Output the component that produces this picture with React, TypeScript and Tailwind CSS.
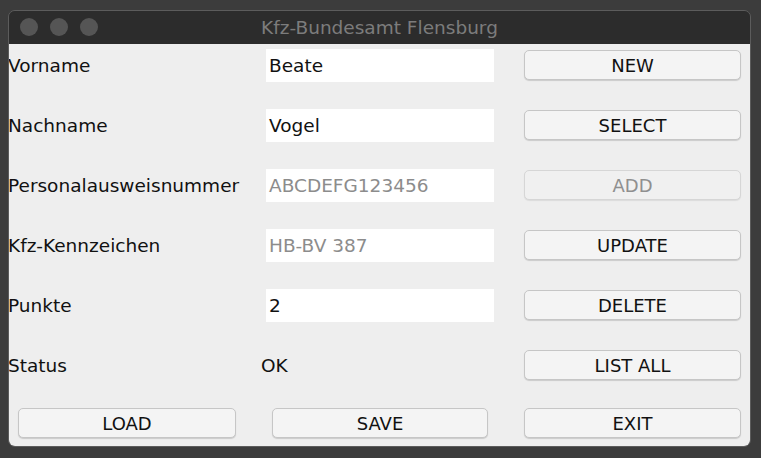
import React from "react";

const font = { fontFamily: '"DejaVu Sans", "Liberation Sans", sans-serif' };

type Row = {
  label: string;
  value: string;
  kind: "field" | "disabled" | "text";
  button: string;
  buttonDisabled?: boolean;
};

const rows: Row[] = [
  { label: "Vorname", value: "Beate", kind: "field", button: "NEW" },
  { label: "Nachname", value: "Vogel", kind: "field", button: "SELECT" },
  { label: "Personalausweisnummer", value: "ABCDEFG123456", kind: "disabled", button: "ADD", buttonDisabled: true },
  { label: "Kfz-Kennzeichen", value: "HB-BV 387", kind: "disabled", button: "UPDATE" },
  { label: "Punkte", value: "2", kind: "field", button: "DELETE" },
  { label: "Status", value: "OK", kind: "text", button: "LIST ALL" },
];

function Button({ children, disabled }: { children: React.ReactNode; disabled?: boolean }) {
  return (
    <button
      type="button"
      disabled={disabled}
      className={
        disabled
          ? "flex h-[30px] w-full items-center justify-center rounded-[5px] border border-[#d6d6d6] bg-[#f0f0f0] text-[18px] text-[#8f8f8f] shadow-[0_1px_1px_rgba(0,0,0,0.08)]"
          : "flex h-[30px] w-full items-center justify-center rounded-[5px] border border-[#c6c6c6] bg-[#f4f4f4] text-[18px] text-[#111] shadow-[0_1px_1px_rgba(0,0,0,0.15)]"
      }
    >
      {children}
    </button>
  );
}

export default function App() {
  return (
    <div style={font} className="flex h-[458px] w-[761px] bg-[#3c3c3c] pb-[11px] pl-[8px] pr-[10px] pt-[10px]">
      <div className="flex flex-1 flex-col overflow-hidden rounded-[7px] border border-[#5c5c5c]">
        <div className="relative flex h-[33px] shrink-0 items-center justify-center bg-[#2c2c2c]">
          <div className="absolute left-[11px] top-[7px] flex gap-[12px]">
            <span className="h-[18px] w-[18px] rounded-full bg-[#555555]" />
            <span className="h-[18px] w-[18px] rounded-full bg-[#555555]" />
            <span className="h-[18px] w-[18px] rounded-full bg-[#555555]" />
          </div>
          <span className="text-[18.5px] text-[#7c7c7c]">Kfz-Bundesamt Flensburg</span>
        </div>
        <div className="flex flex-1 flex-col bg-[#eeeeee] pt-[5px]">
          {rows.map((r) => (
            <div key={r.label} className="grid h-[60px] grid-cols-[257px_228px_30px_217px] items-start">
              <div className="-ml-[1px] flex h-[33px] items-center text-[18.5px] text-[#111]">{r.label}</div>
              {r.kind === "text" ? (
                <div className="-ml-[5px] flex h-[33px] items-center text-[18.5px] text-[#111]">{r.value}</div>
              ) : (
                <div
                  className={
                    r.kind === "field"
                      ? "flex h-[33px] items-center bg-white pl-[3px] text-[18.5px] text-[#111]"
                      : "flex h-[33px] items-center bg-white pl-[3px] text-[18.5px] text-[#8c8c8c]"
                  }
                >
                  {r.value}
                </div>
              )}
              <div />
              <div className="pt-[1px]">
                <Button disabled={r.buttonDisabled}>{r.button}</Button>
              </div>
            </div>
          ))}
          <div className="-mt-[1px] grid grid-cols-[218px_216px_217px] gap-x-[36px] pl-[9px]">
            <Button>LOAD</Button>
            <Button>SAVE</Button>
            <Button>EXIT</Button>
          </div>
        </div>
      </div>
    </div>
  );
}
